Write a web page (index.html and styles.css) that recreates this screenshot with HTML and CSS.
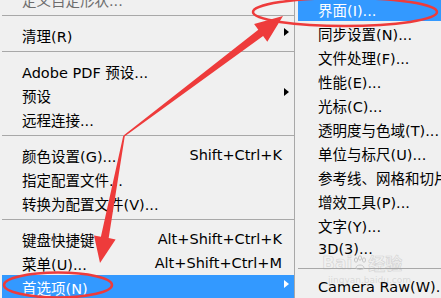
FILE: index.html
```html
<!DOCTYPE html>
<html lang="zh-CN">
<head>
  <meta charset="UTF-8">
  <title>首选项菜单</title>
  <link rel="stylesheet" href="styles.css">
</head>
<body>
  <div class="screen">
    <!-- Edit menu (scrolled to the bottom) -->
    <div class="menu main">
      <div class="item disabled"><span class="label">定义自定形状...</span><span class="sub"></span></div>
      <div class="sep"></div>
      <div class="item"><span class="label">清理(R)</span><span class="sub"><i class="tri"></i></span></div>
      <div class="sep"></div>
      <div class="item"><span class="label">Adobe PDF 预设...</span><span class="sub"></span></div>
      <div class="item"><span class="label">预设</span><span class="sub"><i class="tri"></i></span></div>
      <div class="item"><span class="label">远程连接...</span><span class="sub"></span></div>
      <div class="sep"></div>
      <div class="item"><span class="label">颜色设置(G)...</span><span class="key">Shift+Ctrl+K</span><span class="sub"></span></div>
      <div class="item"><span class="label">指定配置文件...</span><span class="sub"></span></div>
      <div class="item"><span class="label">转换为配置文件(V)...</span><span class="sub"></span></div>
      <div class="sep"></div>
      <div class="item"><span class="label">键盘快捷键</span><span class="key">Alt+Shift+Ctrl+K</span><span class="sub"></span></div>
      <div class="item"><span class="label">菜单(U)...</span><span class="key">Alt+Shift+Ctrl+M</span><span class="sub"></span></div>
      <div class="item active"><span class="label">首选项(N)</span><span class="sub"><i class="tri"></i></span></div>
    </div>

    <!-- Preferences submenu -->
    <div class="menu submenu">
      <div class="item active"><span class="label">界面(I)...</span></div>
      <div class="item"><span class="label">同步设置(N)...</span></div>
      <div class="item"><span class="label">文件处理(F)...</span></div>
      <div class="item"><span class="label">性能(E)...</span></div>
      <div class="item"><span class="label">光标(C)...</span></div>
      <div class="item"><span class="label">透明度与色域(T)...</span></div>
      <div class="item"><span class="label">单位与标尺(U)...</span></div>
      <div class="item"><span class="label">参考线、网格和切片(S)...</span></div>
      <div class="item"><span class="label">增效工具(P)...</span></div>
      <div class="item"><span class="label">文字(Y)...</span></div>
      <div class="item"><span class="label">3D(3)...</span></div>
      <div class="sep"></div>
      <div class="item"><span class="label">Camera Raw(W)...</span></div>
    </div>

    <div class="watermark">
      <span class="wm-logo">Bai<svg width="16" height="16" viewBox="0 0 16 16"><g fill="none" stroke="#c8c8c8" stroke-width="1"><ellipse cx="4" cy="5" rx="1.6" ry="2.2"/><ellipse cx="8" cy="3" rx="1.6" ry="2.2"/><ellipse cx="12" cy="5" rx="1.6" ry="2.2"/><path d="M4 13 C4 9 12 9 12 13 C12 15 4 15 4 13 Z"/></g></svg>经验</span>
      <span class="wm-url">jingyan.baidu.com</span>
    </div>

    <!-- red annotations -->
    <svg class="marks" width="441" height="298" viewBox="0 0 441 298">
      <g fill="#ee3b3b">
        <polygon points="123.5,135.4 258.3,29.7 254.1,24.1 283,16 267.3,41.7 263.1,36.1 124.5,136.6"/>
        <polygon points="123.2,135.9 100.9,236.7 94,235.4 100,263 115.6,239.4 108.7,238.1 124.8,136.1"/>
      </g>
      <g fill="none" stroke="#ee3b3b" stroke-width="2.5">
        <ellipse cx="345" cy="12" rx="92" ry="14"/>
        <ellipse cx="58" cy="285" rx="54" ry="12.5"/>
      </g>
    </svg>
  </div>
</body>
</html>
```

FILE: styles.css
```css
body {
  margin: 0;
  background-color: #f0f0f0;
  font-family: "DejaVu Sans", "Noto Sans CJK SC", sans-serif;
  font-size: 14.5px;
  color: #000;
  overflow: hidden;
}
.screen {
  position: relative;
  display: flex;
  width: 441px;
  height: 298px;
  overflow: hidden;
}
.menu {
  box-sizing: border-box;
  white-space: nowrap;
}
.main {
  width: 295px;
  flex-shrink: 0;
  padding-left: 2px;
  margin-top: -13px;
  border-right: 1px solid #a8a8a8;
  height: 311px;
}
.submenu {
  flex: 1;
  min-width: 0;
  padding-left: 3px;
  margin-top: -3px;
  overflow: hidden;
}
.item {
  display: flex;
  align-items: center;
  height: 24px;
  padding-left: 20px;
}
.item .label {
  flex: 1;
}
.item.disabled {
  color: #6d6d6d;
}
.item.active {
  background-color: #3399ff;
  color: #fff;
}
.key {
  margin-left: 10px;
}
.sub {
  display: flex;
  align-items: center;
  width: 12px;
  height: 100%;
}
.tri {
  margin-left: 2px;
  margin-bottom: 6px;
  width: 0;
  height: 0;
  border-left: 5px solid #000;
  border-top: 4.5px solid transparent;
  border-bottom: 4.5px solid transparent;
}
.active .tri {
  border-left-color: #fff;
}
.sep {
  height: 1px;
  margin: 4px 0 7px;
  background-color: #a8a8a8;
}
.submenu .sep {
  margin: 7px 0 6px;
}
.marks {
  position: absolute;
  left: 0;
  top: 0;
  pointer-events: none;
}
.watermark {
  position: absolute;
  left: 322px;
  top: 250px;
  display: flex;
  flex-direction: column;
  pointer-events: none;
}
.wm-logo {
  display: flex;
  align-items: center;
  font-size: 17px;
  font-weight: bold;
  color: transparent;
  -webkit-text-stroke: 0.7px rgba(160, 160, 160, 0.35);
}
.wm-url {
  margin-left: 6px;
  font-size: 9px;
  color: rgba(160, 160, 160, 0.3);
}
```
